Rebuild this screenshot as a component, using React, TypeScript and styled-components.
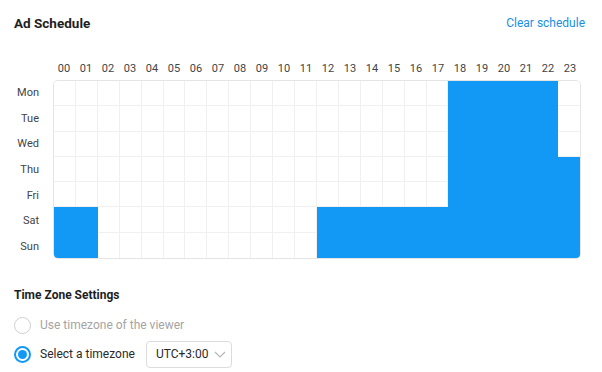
import styled, { createGlobalStyle } from "styled-components";

const GlobalStyle = createGlobalStyle`
  body {
    margin: 0;
    background: #fff;
    font-family: Roboto, "Liberation Sans", Arial, sans-serif;
    color: #222;
  }
`;

const Page = styled.div`
  padding: 12px 14px;
  width: 602px;
  box-sizing: border-box;
`;

const Header = styled.div`
  display: flex;
  justify-content: space-between;
  align-items: center;
  height: 22px;
  padding-right: 3px;
`;

const Title = styled.h1`
  margin: 0;
  font-size: 13.5px;
  font-weight: 700;
  color: #1e1e1e;
`;

const LinkButton = styled.button`
  border: none;
  background: none;
  padding: 0;
  font-family: inherit;
  font-size: 12px;
  color: #1a8fe3;
  cursor: pointer;
`;

const Schedule = styled.div`
  display: grid;
  grid-template-columns: 39px 528px;
  grid-template-rows: 22px 179px;
  row-gap: 1px;
  margin-top: 23px;
`;

const HourRow = styled.div`
  grid-column: 2;
  display: grid;
  grid-template-columns: repeat(24, 1fr);
  align-items: center;
`;

const HourLabel = styled.span`
  text-align: center;
  font-size: 11px;
  color: #444;
`;

const DayColumn = styled.div`
  display: grid;
  grid-template-rows: repeat(7, 1fr);
  padding-right: 14px;
`;

const DayLabel = styled.span`
  display: flex;
  align-items: center;
  justify-content: flex-end;
  font-size: 11px;
  color: #444;
`;

const Board = styled.div`
  display: grid;
  grid-template-columns: repeat(24, 1fr);
  grid-template-rows: repeat(7, 1fr);
  border: 1px solid #e4e4e4;
  border-radius: 5px;
  overflow: hidden;
`;

const Cell = styled.div<{ $on: boolean; $lastCol: boolean; $lastRow: boolean }>`
  background: ${({ $on }) => ($on ? "#1299f5" : "#fff")};
  border-right: ${({ $lastCol, $on }) =>
    $lastCol ? "none" : `1px solid ${$on ? "#1299f5" : "#f0f0f0"}`};
  border-bottom: ${({ $lastRow, $on }) =>
    $lastRow ? "none" : `1px solid ${$on ? "#1299f5" : "#f0f0f0"}`};
  cursor: pointer;
`;

const SectionTitle = styled.h2`
  margin: 27px 0 7px;
  font-size: 12px;
  line-height: 18px;
  font-weight: 700;
  color: #1e1e1e;
`;

const Options = styled.div`
  display: flex;
  flex-direction: column;
  gap: 1px;
`;

const OptionRow = styled.label<{ $disabled?: boolean }>`
  display: flex;
  align-items: center;
  gap: 9px;
  height: 28px;
  font-size: 12px;
  color: ${({ $disabled }) => ($disabled ? "#a4a4a4" : "#2a2a2a")};
`;

const Radio = styled.span<{ $checked: boolean }>`
  width: 17px;
  height: 17px;
  box-sizing: border-box;
  border-radius: 50%;
  border: ${({ $checked }) => ($checked ? "2px solid #1299f5" : "1px solid #cfcfcf")};
  display: flex;
  align-items: center;
  justify-content: center;

  &::after {
    content: "";
    width: 9px;
    height: 9px;
    border-radius: 50%;
    background: #1299f5;
    display: ${({ $checked }) => ($checked ? "block" : "none")};
  }
`;

const Select = styled.div`
  margin-left: 2px;
  display: flex;
  align-items: center;
  justify-content: space-between;
  width: 86px;
  height: 27px;
  box-sizing: border-box;
  padding: 0 5px 0 9px;
  border: 1px solid #dcdcdc;
  border-radius: 4px;
  font-size: 12px;
  color: #2a2a2a;
`;

const days = ["Mon", "Tue", "Wed", "Thu", "Fri", "Sat", "Sun"];
const hours = Array.from({ length: 24 }, (_, i) => String(i).padStart(2, "0"));

// selected hour ranges for each day, [from, to] inclusive
const selected: [number, number][][] = [
  [[18, 22]],
  [[18, 22]],
  [[18, 22]],
  [[18, 23]],
  [[18, 23]],
  [[0, 1], [12, 23]],
  [[0, 1], [12, 23]],
];

const isOn = (day: number, hour: number) =>
  selected[day].some(([a, b]) => hour >= a && hour <= b);

const App = () => {
  return (
    <Page>
      <GlobalStyle />
      <Header>
        <Title>Ad Schedule</Title>
        <LinkButton>Clear schedule</LinkButton>
      </Header>

      <Schedule>
        <HourRow>
          {hours.map((h) => (
            <HourLabel key={h}>{h}</HourLabel>
          ))}
        </HourRow>
        <DayColumn>
          {days.map((d) => (
            <DayLabel key={d}>{d}</DayLabel>
          ))}
        </DayColumn>
        <Board>
          {days.map((d, di) =>
            hours.map((h, hi) => (
              <Cell
                key={d + h}
                $on={isOn(di, hi)}
                $lastCol={hi === 23}
                $lastRow={di === 6}
              />
            ))
          )}
        </Board>
      </Schedule>

      <SectionTitle>Time Zone Settings</SectionTitle>
      <Options>
        <OptionRow $disabled>
          <Radio $checked={false} />
          Use timezone of the viewer
        </OptionRow>
        <OptionRow>
          <Radio $checked />
          Select a timezone
          <Select>
            UTC+3:00
            <svg width="12" height="7" viewBox="0 0 12 7" fill="none">
              <path d="M1 1l5 5 5-5" stroke="#b5b5b5" strokeWidth="1.1" />
            </svg>
          </Select>
        </OptionRow>
      </Options>
    </Page>
  );
};

export default App;
